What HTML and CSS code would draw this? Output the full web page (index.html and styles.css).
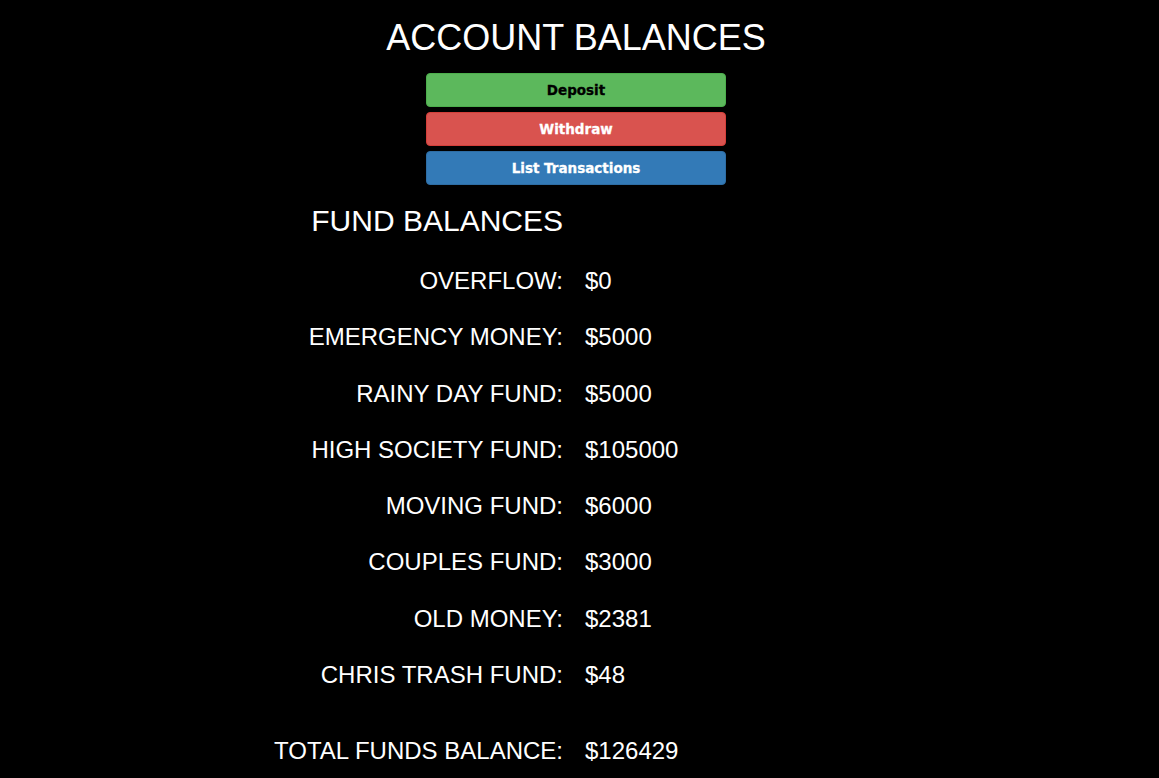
FILE: index.html
```html
<!DOCTYPE html>
<html>
<head>
<meta charset="utf-8">
<title>Account Balances</title>
<link rel="stylesheet" href="styles.css">
</head>
<body>
<main class="page">
  <h1 class="title">ACCOUNT BALANCES</h1>
  <div class="actions">
    <button class="btn btn-deposit">Deposit</button>
    <button class="btn btn-withdraw">Withdraw</button>
    <button class="btn btn-list">List Transactions</button>
  </div>
  <section class="funds">
    <h2 class="funds-title">FUND BALANCES</h2>
    <div class="fund-row"><span class="label">OVERFLOW:</span><span class="value">$0</span></div>
    <div class="fund-row"><span class="label">EMERGENCY MONEY:</span><span class="value">$5000</span></div>
    <div class="fund-row"><span class="label">RAINY DAY FUND:</span><span class="value">$5000</span></div>
    <div class="fund-row"><span class="label">HIGH SOCIETY FUND:</span><span class="value">$105000</span></div>
    <div class="fund-row"><span class="label">MOVING FUND:</span><span class="value">$6000</span></div>
    <div class="fund-row"><span class="label">COUPLES FUND:</span><span class="value">$3000</span></div>
    <div class="fund-row"><span class="label">OLD MONEY:</span><span class="value">$2381</span></div>
    <div class="fund-row"><span class="label">CHRIS TRASH FUND:</span><span class="value">$48</span></div>
    <div class="fund-row total"><span class="label">TOTAL FUNDS BALANCE:</span><span class="value">$126429</span></div>
  </section>
</main>
</body>
</html>
```

FILE: styles.css
```css
html, body {
  margin: 0;
  padding: 0;
  background: #000;
}
body {
  color: #fff;
  font-family: "Liberation Sans", Arial, sans-serif;
}
.page {
  width: 1152px;
  display: flex;
  flex-direction: column;
  align-items: center;
}
.title {
  margin: 17px 0 14px;
  font-size: 36px;
  font-weight: normal;
  line-height: 42px;
}
.actions {
  display: flex;
  flex-direction: column;
  gap: 5px;
  width: 300px;
}
.btn {
  height: 34px;
  border: 1px solid transparent;
  border-radius: 4px;
  font-family: "DejaVu Sans", sans-serif;
  font-weight: bold;
  font-size: 13.5px;
  -webkit-text-stroke: 0.3px currentColor;
  padding: 0;
  cursor: pointer;
}
.btn-deposit { background: #5cb85c; border-color: #4cae4c; color: #000; }
.btn-withdraw { background: #d9534f; border-color: #d43f3a; color: #fff; }
.btn-list { background: #337ab7; border-color: #2e6da4; color: #fff; }
.funds {
  align-self: stretch;
  display: grid;
  grid-template-columns: 563px 1fr;
  column-gap: 22px;
  margin-top: 8px;
}
.funds-title {
  grid-column: 1;
  margin: 0 0 4px;
  text-align: right;
  font-size: 30px;
  font-weight: normal;
  line-height: 56px;
}
.fund-row {
  grid-column: 1 / 3;
  display: grid;
  grid-template-columns: subgrid;
  font-size: 24px;
  line-height: 56.3px;
}
.fund-row .label { text-align: right; }
.fund-row.total { margin-top: 20px; }
```
